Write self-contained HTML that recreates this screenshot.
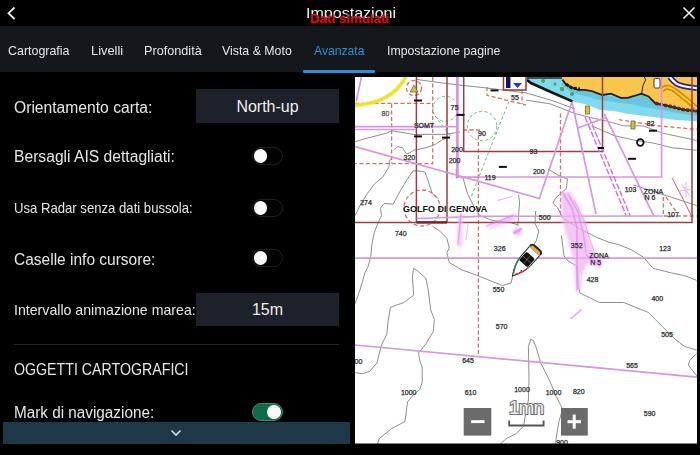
<!DOCTYPE html>
<html><head><meta charset="utf-8">
<style>
*{margin:0;padding:0;box-sizing:border-box}
html,body{width:700px;height:455px;background:#000;overflow:hidden}
body{position:relative;font-family:"Liberation Sans",sans-serif;color:#e8e8e8}
.a{position:absolute;white-space:nowrap}
.t{position:absolute;white-space:nowrap;line-height:1;color:#e6e6e6}
#tabbar{position:absolute;left:0;top:26px;width:700px;height:46px;background:#14171c}
.tab{position:absolute;top:44px;transform-origin:0 0;font-size:13px;line-height:1;color:#e4e4e4;white-space:nowrap}
.L{left:13.5px;font-size:16px;transform-origin:0 0}
.S{left:13.5px;font-size:14.5px;transform-origin:0 0}
.btn{position:absolute;left:196px;width:143px;background:#1d212a;color:#eee;font-size:16px;text-align:center}
.tog{position:absolute;left:252px;width:31px;height:17.5px;border-radius:9px;border:1px solid #1f1f1f;background:#020202}
.tog i{position:absolute;left:0.6px;top:0.8px;width:13.8px;height:13.8px;border-radius:50%;background:#fafafa}
.tog.on{background:#0e6a48;border-color:#4a8a70}
.tog.on i{left:14px}
</style></head>
<body>
<!-- header -->
<svg class="a" style="left:0;top:0" width="30" height="26"><path d="M14.5 7.5 L8.5 13.2 L14.5 19" fill="none" stroke="#eee" stroke-width="1.8"/></svg>
<div class="t" style="left:306px;top:5px;font-size:15px;color:#f2f2f2;transform:scaleX(1.07);transform-origin:0 0">Impostazioni</div>
<div class="t" style="left:310px;top:12px;font-size:13.3px;font-weight:bold;color:#c4161c;text-shadow:0.5px 0.5px 1.5px #600">Dati simulati</div>
<svg class="a" style="left:680px;top:4px" width="18" height="18"><path d="M3.5 3.5 L14.5 14.5 M14.5 3.5 L3.5 14.5" stroke="#eee" stroke-width="1.6"/></svg>

<div id="tabbar"></div>
<div class="tab" style="left:8px;transform:scaleX(0.956)">Cartografia</div>
<div class="tab" style="left:91px;transform:scaleX(0.99)">Livelli</div>
<div class="tab" style="left:144px;transform:scaleX(0.974)">Profondità</div>
<div class="tab" style="left:222px;transform:scaleX(0.95)">Vista &amp; Moto</div>
<div class="tab" style="left:314px;color:#2a8fd8;transform:scaleX(0.934)">Avanzata</div>
<div class="tab" style="left:387px;transform:scaleX(0.945)">Impostazione pagine</div>
<div class="a" style="left:302.5px;top:69.5px;width:72.5px;height:3px;background:#2b90da;border-radius:1px"></div>

<!-- left panel -->
<div class="t L" style="top:99.5px;transform:scaleX(0.978)">Orientamento carta:</div>
<div class="btn" style="top:89px;height:34px;line-height:34px"><span style="position:relative;top:1px">North-up</span></div>
<div class="t L" style="top:149px;transform:scaleX(0.978)">Bersagli AIS dettagliati:</div>
<div class="tog" style="top:147px"><i></i></div>
<div class="t S" style="top:201px;transform:scaleX(0.905)">Usa Radar senza dati bussola:</div>
<div class="tog" style="top:199px"><i></i></div>
<div class="t L" style="top:252px;transform:scaleX(0.969)">Caselle info cursore:</div>
<div class="tog" style="top:249px"><i></i></div>
<div class="t S" style="top:303px;transform:scaleX(0.976)">Intervallo animazione marea:</div>
<div class="btn" style="top:293px;height:33px;line-height:33px">15m</div>
<div class="a" style="left:14px;top:344px;width:325px;height:1px;background:#262626"></div>
<div class="t L" style="top:362px;transform:scaleX(0.887)">OGGETTI CARTOGRAFICI</div>
<div class="t L" style="top:405px;transform:scaleX(0.955)">Mark di navigazione:</div>
<div class="tog on" style="top:403px"><i></i></div>
<div class="a" style="left:3px;top:422px;width:347px;height:22px;background:#1e3847"></div>
<svg class="a" style="left:168px;top:426px" width="16" height="14"><path d="M3.5 4.5 L8 9 L12.5 4.5" fill="none" stroke="#dde" stroke-width="1.6"/></svg>

<!-- map -->
<svg class="a" style="left:355px;top:77px" width="342" height="367" viewBox="355 77 342 367" font-family="Liberation Sans, sans-serif">
<rect x="355" y="77" width="342" height="367" fill="#fff"/>
<!-- shallow water / land -->
<path d="M527 77 L697 77 L697 121.3 L676.2 120 L655.4 117.2 L627.7 113.7 L613.9 111 L600 110 L585 104 L572.4 101.4 L531 83 L527 80 Z" fill="#80d9ec"/>
<path d="M562.4 79.6 L571.4 87.3 L584.3 89.9 L602.3 95 L620.8 97.8 L641.6 93.6 L655.4 103.3 L672 106.8 L697 111 L697 116 L672 112 L650 108 L630 104 L600 100 L585 96 L572 93 L562 85 Z" fill="#5cbcd8" opacity="0.7"/>
<path d="M562.4 77 L697 77 L697 111 L683.1 109.6 L672 106.8 L662.4 104.7 L655.4 103.3 L648.5 96.4 L641.6 93.6 L627.7 97.8 L620.8 97.8 L611 93.6 L602.3 95 L592 91.1 L584.3 89.9 L577.8 89.9 L571.4 87.3 L566.3 84.7 L562.4 79.6 Z" fill="#fac54c"/>
<path d="M562.4 79.6 L566.3 84.7 L571.4 87.3 L577.8 89.9 L584.3 89.9 L592 91.1 L602.3 95 L611 93.6 L620.8 97.8 L627.7 97.8 L641.6 93.6 L648.5 96.4 L655.4 103.3 L662.4 104.7 L672 106.8 L683.1 109.6 L697 111" fill="none" stroke="#2a1a10" stroke-width="1.8"/>
<path d="M655.4 103.3 L662.4 104.7 L672 106.8 L683.1 109.6 L697 111" fill="none" stroke="#5a2a10" stroke-width="3.5" stroke-dasharray="3 1.5"/>
<path d="M566 84 L572 88 L580 89" fill="none" stroke="#1a1a1a" stroke-width="3" stroke-dasharray="3 1.5"/>
<path d="M641.6 93.6 L643 85.3 L645.7 79.8 L644.3 77" fill="none" stroke="#222" stroke-width="1"/>
<path d="M527 78 L562 78" stroke="#222" stroke-width="1.5"/>
<path d="M527 80 L531 83 L552 92.5 L572.4 101.4" fill="none" stroke="#111" stroke-width="2.6"/>
<g fill="#3cac5a"><circle cx="543" cy="81" r="2"/><circle cx="562" cy="89" r="2.2"/><circle cx="572" cy="94" r="2"/><circle cx="555" cy="84" r="1.5"/></g>
<path d="M669.8 77 Q673 81 676.4 83.6 Q681 86.5 697 88.2" fill="none" stroke="#232394" stroke-width="5.6"/>
<path d="M669.8 77 Q673 81 676.4 83.6 Q681 86.5 697 88.2" fill="none" stroke="#fff" stroke-width="2.2"/>
<path d="M661.9 90.2 Q665 86.5 669 87.6 Q673 88.5 676.4 91.5 L689.6 102.1 L697 109" fill="none" stroke="#e07810" stroke-width="5"/>
<path d="M661.9 90.2 Q665 86.5 669 87.6 Q673 88.5 676.4 91.5 L689.6 102.1 L697 109" fill="none" stroke="#ffd620" stroke-width="2"/>
<rect x="654" y="78.4" width="6" height="9.6" rx="1.5" fill="#fff" stroke="#333" stroke-width="1"/>
<!-- grey contours -->
<g fill="none" stroke="#8f8f8f" stroke-width="1">
<path d="M416 79.4 L452.7 84.3 L486.9 88 L526 92.9 L550.4 100 L574.9 108.8"/>
<path d="M355 141.7 L367.2 138.1 L386.8 133.2 L391.6 130.7 L413.6 134.4 L445.4 134.4 L460 132"/>
<path d="M394 150.3 L397.7 146.6 L402.6 147.8 L406.3 154 L410 152.7 L413.6 150.3 L425.8 147.8 L435.6 144.2 L443 139.3 L447.8 138"/>
<path d="M390.6 158.6 L390 160 L388.8 167.2 L382.8 176.9 L374.3 184.2 L367.1 193.8 L359.8 205.9 L355 215.6"/>
<path d="M413 170.9 L405.7 181.7 L397.3 196.2 L393.2 204.1 L384 203.5 L380.4 208.3 L381.6 215.6 L378 222.8 L374.3 232.5 L371.9 244.6 L370.7 256.7 L368.3 266 L364.8 273.2 L359.9 290.3 L355 303.7"/>
<path d="M413 170.9 L417.8 170.9 L425 172 L427.5 179.3 L430 186.6 L432.3 193.8 L438.3 198.6"/>
<path d="M432.4 226.2 L439.7 231.1 L446.9 238.3 L449.3 248 L446.9 252.8 L449.3 262.5 L461.4 269.7 L478.3 275.8 L492.8 281.8 L502.5 285.5 L511 283 L513.4 273.4 L520.6 262.5 L529 252.8 L536.3 240.7 L538.7 231.1 L535 223.6 L535.6 211"/>
<path d="M526 100.2 L550.4 103.9 L574.9 113.6 L594.4 118.5 L606.6 121 L623.7 125.9 L643.2 125.9 L662.8 133.2 L697 140.5"/>
<path d="M592 125.9 L614 135.6 L636 140.5 L653 143 L672.5 147.8 L697 150.3"/>
<path d="M462.5 176.3 L467.4 193.4 L474.7 208 L479.6 215.4 L491.8 220.3 L511.3 222.7 L518 225"/>
<path d="M518.4 195 L519.6 201.9 L518.4 217.9 L517.9 225.9"/>
<path d="M548 169 L560.2 176.3 L567.5 178.8 L566.3 188.5 L555.3 198.3 L552.9 203.2 L557.8 208 L562.6 217.9 L570 222.7 L582.2 230 L596.8 237.4 L609 242.3 L618.8 244.7 L631 249.6 L643.2 256.9 L653 268.3 L672.5 273.2 L684.8 275.7 L697 280.5"/>
<path d="M561.4 235.5 L564 255.7 L567.7 260.7 L576.6 265.8 L578.5 285.4 L579.7 292.8 L589.5 297.6 L599.3 302.5 L623.7 302.5 L648.1 312.3 L655.5 319.6 L662.8 327 L675 339.2 L684.8 346.5 L697 350.2"/>
<path d="M633.5 184.9 L697 205.6"/>
<path d="M413.6 268.3 L417.3 270.8 L425.8 278.1 L428.3 290.3 L430.7 309.9 L434.4 319.6 L433.2 331.8 L425.8 344 L418.5 353 L419.7 360.3 L422.2 367.7 L422.2 382.3 L419.7 389.6 L413.6 394.5 L407.5 401.9 L405 421.4 L391.6 428.7 L379.4 438.5 L377 445"/>
<path d="M413.6 268.3 L412.4 275.7 L413.6 295.2 L403.9 302.5 L390.4 307.4 L388 322 L386.8 334.3 L381.9 344 L379.4 353 L377 362.8 L369.7 371.3 L362.3 373.8 L355 372.5"/>
<path d="M499.1 445 L506.4 438.5 L516.2 433.6 L523.5 426.3 L526 411.6 L528.4 400 L529 380 L528.4 346.5 L530.9 339.2 L533.3 340.4 L535.8 346.5 L540.7 362.8 L545.5 372.5 L550.4 382.3 L555.3 394.5 L560.2 404.3 L562.6 409.2 L559 421.4 L556.5 436 L555.3 445"/>
<path d="M697 353 L689.7 360.3 L688.4 365.2 L697 376.2"/>
</g>
<!-- orange dashed -->
<g fill="none" stroke="#d8705e" stroke-width="1.3" stroke-dasharray="4 2.5">
<path d="M355 103.4 L432.7 103.4"/>
<path d="M432.7 77 L432.7 163.7 L355 163.7"/>
<path d="M391.6 103.9 L391.6 163.7"/>
<path d="M463 130 L480 130"/>
<path d="M478.4 135.6 L478.4 355"/>
<path d="M456.4 169 L456.4 177.5 L478.4 177.5"/>
<path d="M487 87 L487 95.3 L526 105 M522 90 L522 104"/>
<path d="M560.5 113.6 L560.5 216"/>
<path d="M618.8 119.7 L660 126 L697 129.5"/>
<path d="M663.3 197 L663.3 216 L697 216"/>
<path d="M666 197 L676.4 212"/>
<circle cx="422" cy="208" r="18"/>
<circle cx="414" cy="88" r="7.5"/>
</g>
<!-- green dashed -->
<g fill="none" stroke="#68bb78" stroke-width="1" stroke-dasharray="3 2.5">
<circle cx="445.4" cy="108.8" r="12.5"/>
<circle cx="482" cy="126" r="14.7"/>
<path d="M508.9 101.4 L482 169 L470 200"/>
<path d="M435 116 L452 138"/>
</g>
<!-- dark red -->
<g fill="none" stroke="#964242" stroke-width="1.5">
<path d="M416.4 77 L416.4 222.5 M447 77 L447 222.5"/>
<path d="M463.7 77 L463.7 151.5 L602.5 151.5 L602.5 77"/>
<path d="M355 222.6 L692 222.6 L692 77"/>
</g>
<path d="M416.4 222.4 L447 222.4" stroke="#7a2020" stroke-width="2.4"/>
<!-- magenta -->
<g fill="none" stroke="#d696e2" stroke-width="1.7">
<path d="M361.4 77 L356.3 101.4"/>
<path d="M355 126.6 L457.6 126.6 M355 129.5 L416 129.5"/>
<path d="M355 146.5 L539.4 198.5 L572 102"/>
<path d="M457.4 177 L661.6 177 L661.6 77"/>
<path d="M572 102 L596 214"/>
<path d="M604.2 113.6 L653.6 215.6 M577.3 128.3 L606.6 117.3"/>
<path d="M416.7 218.5 L480 216.3 L663 216"/>
<path d="M355 258.2 L697 258.2"/>
<path d="M355 345 L697 377.2"/>
</g>
<path d="M457.4 77 L457.4 177" stroke="#d68ee2" stroke-width="2.6"/>
<path d="M585 117 L626.1 215.4 M589 117 L630 215.4" stroke="#d070dc" stroke-width="1.4" stroke-dasharray="6 2"/>
<path d="M681 195 L691.3 215.6 M672 178 L681 195" stroke="#c06080" stroke-width="1"/>
<!-- pink spray -->
<defs><filter id="bl" x="-50%" y="-50%" width="200%" height="200%"><feGaussianBlur stdDeviation="1.6"/></filter>
<filter id="bl2" x="-50%" y="-50%" width="200%" height="200%"><feGaussianBlur stdDeviation="0.7"/></filter></defs>
<g filter="url(#bl)" opacity="0.75">
<path d="M561 193 L570 191 L578 205 L585 222 L590 240 L595 254 L604 262 L600 268 L588 263 L582 275 L581 291 L576 291 L574 262 L568 240 L562 220 Z" fill="#f0b4f4"/>
<path d="M488 227 L514 214 L517 218 L490 229 Z" fill="#eeaaf4"/>
<path d="M458 214 L463 214 L462 247 L457 246 Z" fill="#f0b8f4"/>
<path d="M513 229 L522 228 L521 235 L514 235 Z" fill="#eaa0f2"/>
</g>
<g fill="none" stroke-linecap="round" filter="url(#bl2)" stroke="#dc78ec" opacity="0.55">
<path d="M563 193 L572 208 L577 228 L577 255 L577 290" stroke-width="1.6"/>
<path d="M568 194 L578 212 L583 232 L586 252" stroke-width="1.3"/>
<path d="M574 200 L584 220 L590 240 L598 262" stroke-width="1"/>
<path d="M586 255 L600 266" stroke-width="1.2"/>
<path d="M461 214 L458 244" stroke-width="1.3"/>
<path d="M468 224 L466 240" stroke-width="1"/>
<path d="M486.4 225.9 L512.7 215.6" stroke-width="1.6"/>
<path d="M497.9 200.5 L512 196.5" stroke-width="1.2"/>
<path d="M514 233 L521 229" stroke-width="2.2"/>
<path d="M571 318.4 L581 309.9" stroke-width="2"/>
<path d="M682 185 L690 196 M686 182 L686 197 M680 191 L692 189" stroke-width="1.2"/>
</g>
<path d="M405.8 77 Q392 103 355 105.3" fill="none" stroke="#f5ea50" stroke-width="5" opacity="0.5"/>
<path d="M405.8 77 Q392 103 355 105.3" fill="none" stroke="#eee030" stroke-width="3"/>
<!-- depth texts -->
<g font-size="7" fill="#2a2a2a" stroke="#2a2a2a" stroke-width="0.25" text-anchor="middle">
<text x="385.5" y="116" fill="#888">80</text>
<text x="424" y="128">SOMT</text>
<text x="409.4" y="159.6">320</text>
<text x="454.5" y="110">75</text>
<text x="457" y="151.5">200</text>
<text x="454.5" y="162.5">200</text>
<text x="515" y="100">55</text>
<text x="482" y="136">90</text>
<text x="533.5" y="154">93</text>
<text x="538.8" y="174">200</text>
<text x="490" y="180">119</text>
<text x="630.5" y="192">103</text>
<text x="653.4" y="193.5">ZONA</text>
<text x="650" y="200">N 6</text>
<text x="673" y="216.6">107</text>
<text x="366" y="204.5">274</text>
<text x="400.8" y="236">740</text>
<text x="544.7" y="219.6">500</text>
<text x="499.7" y="251">326</text>
<text x="576.7" y="248.4">352</text>
<text x="599" y="258">ZONA</text>
<text x="595.6" y="265">N 5</text>
<text x="498.5" y="292">550</text>
<text x="665" y="251">123</text>
<text x="592.5" y="282">428</text>
<text x="657.3" y="301">400</text>
<text x="501.6" y="329.4">570</text>
<text x="667" y="337">505</text>
<text x="358.5" y="364">00</text>
<text x="468" y="363">645</text>
<text x="632" y="367.7">565</text>
<text x="408.7" y="394.5">1000</text>
<text x="470.5" y="395">610</text>
<text x="522" y="392">1000</text>
<text x="553.5" y="394.5">1000</text>
<text x="578.8" y="393.8">820</text>
<text x="649.6" y="415.8">590</text>
<text x="562" y="445">900</text>
<text x="650.6" y="126">82</text>
</g>
<text x="403" y="212.2" font-size="9" font-weight="bold" fill="#111">GOLFO DI GENOVA</text>
<!-- nav marks -->
<g fill="#111">
<rect x="414" y="99.5" width="8" height="2"/><rect x="414" y="135.4" width="8" height="2"/><rect x="442" y="136.6" width="8" height="2"/>
<rect x="456.5" y="113.9" width="8" height="2"/><rect x="490.5" y="89.4" width="8" height="2"/><rect x="498.8" y="165.9" width="8" height="2"/>
<rect x="649" y="129.7" width="8" height="2"/><rect x="628" y="157.8" width="8" height="2"/><rect x="598" y="147" width="6" height="2"/>
</g>
<circle cx="640.3" cy="142.5" r="3.3" fill="none" stroke="#111" stroke-width="1.8"/>
<g fill="#d9c030" stroke="#444" stroke-width="0.6">
<path d="M410 92 L414 85 L418 92 Z"/>
<rect x="585.5" y="106" width="4" height="8"/>
<rect x="631" y="121" width="4" height="8"/>
</g>
<!-- nav box -->
<rect x="503.5" y="76" width="22.5" height="14" fill="#fff" stroke="#8e3434" stroke-width="1.5"/>
<rect x="506" y="77" width="4.5" height="11" fill="#14145a"/>
<path d="M513 83 L522 83 L517.5 88 Z" fill="#1c3ccc"/>
<!-- boat -->
<g transform="translate(524.8 262) rotate(221.5)">
<path d="M0 -18.7 C4 -12 6.8 -6 6.8 2 L6.8 15.5 Q6.8 18.7 3 18.7 L-3 18.7 Q-6.8 18.7 -6.8 15.5 L-6.8 2 C-6.8 -6 -4 -12 0 -18.7 Z" fill="#fff" stroke="#2a2a2a" stroke-width="1.1"/>
<path d="M-6.8 14 L6.8 14 L6.8 15.5 Q6.8 18.7 3 18.7 L-3 18.7 Q-6.8 18.7 -6.8 15.5 Z" fill="#dcaa58"/>
<path d="M-6.8 15.5 Q-6.8 18.7 -3 18.7 L3 18.7 Q6.8 18.7 6.8 15.5" fill="none" stroke="#222" stroke-width="1.8"/>
<rect x="-5.7" y="-2.4" width="11.4" height="11.4" rx="2" fill="#111"/>
<path d="M0 -2 L0 8.6 M-5.3 3.3 L5.3 3.3" stroke="#888" stroke-width="0.6"/>
<path d="M6.3 -1 C6 -7 3.5 -12 0.8 -16" fill="none" stroke="#2a8a4a" stroke-width="1.6"/>
<path d="M-6.3 -1 C-6 -7 -3.5 -12 -0.8 -16" fill="none" stroke="#c04040" stroke-width="1.4"/>
<circle cx="-3.2" cy="-9" r="0.9" fill="#444"/>
</g>
<!-- zoom controls -->
<rect x="463.7" y="408" width="27.6" height="27.6" fill="#6b6b6b"/>
<rect x="471" y="420.2" width="13.5" height="2.9" fill="#fff"/>
<rect x="561" y="408" width="26.8" height="27.6" fill="#6b6b6b"/>
<rect x="567.5" y="420.2" width="13.5" height="3" fill="#fff"/>
<rect x="572.7" y="414.6" width="3" height="14.1" fill="#fff"/>
<text x="526.1" y="414.4" font-size="19" text-anchor="middle" fill="#f2f2f2" stroke="#707070" stroke-width="2.2" paint-order="stroke" letter-spacing="-0.9">1mn</text>
<path d="M509.2 420.6 L509.2 425.5 L543.6 425.5 L543.6 420.6" fill="none" stroke="#555" stroke-width="1.8"/>
<rect x="355" y="443.5" width="342" height="1" fill="#000"/>
</svg>
</body></html>
